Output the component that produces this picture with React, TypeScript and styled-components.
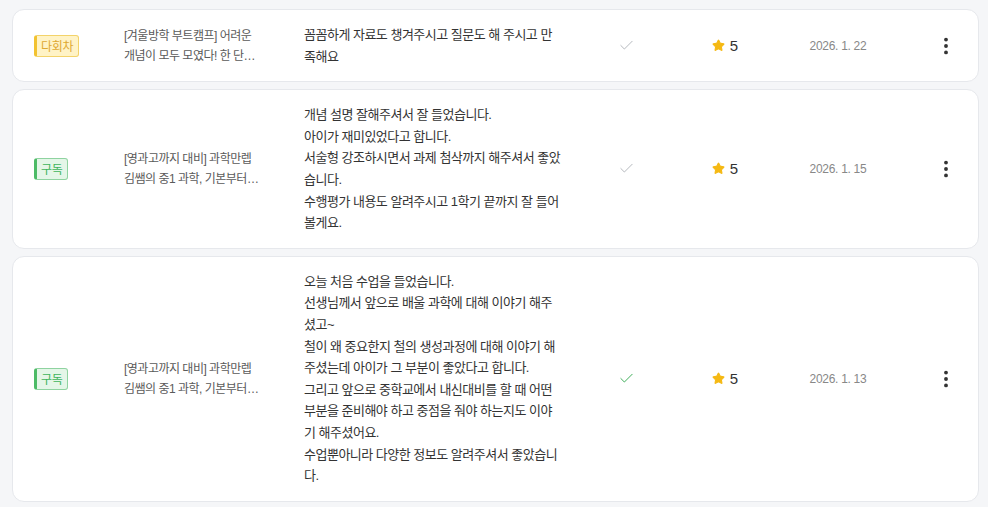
import React from 'react';
import styled, { createGlobalStyle } from 'styled-components';
import { Check, Star, EllipsisVertical } from 'lucide-react';

const GlobalStyle = createGlobalStyle`
  html, body {
    margin: 0;
    padding: 0;
    background: #f5f6f8;
  }
  body {
    font-family: 'Liberation Sans', 'Noto Sans CJK KR', sans-serif;
    color: #333;
  }
`;

const List = styled.div`
  display: flex;
  flex-direction: column;
  gap: 7px;
  padding: 9px 9px 9px 12px;
`;

const Card = styled.div`
  display: grid;
  grid-template-columns: 90px 180px 272px 101px 96px 130px 1fr 40px;
  align-items: center;
  padding: 14px 12px 14px 21px;
  background: #fff;
  border: 1px solid #e6e8ec;
  border-radius: 12px;
`;

const Badge = styled.span<{ $tone: 'yellow' | 'green' }>`
  justify-self: start;
  display: inline-flex;
  align-items: center;
  height: 20px;
  padding: 0 5px 0 4px;
  border: 1px solid ${(p) => (p.$tone === 'yellow' ? '#f3d36a' : '#8fd3a0')};
  border-left: 3px solid ${(p) => (p.$tone === 'yellow' ? '#f2c230' : '#4cbb66')};
  border-radius: 3px;
  background: ${(p) => (p.$tone === 'yellow' ? '#fff3c6' : '#e4f6e8')};
  color: ${(p) => (p.$tone === 'yellow' ? '#dea832' : '#3fb45c')};
  font-size: 12px;
  letter-spacing: -0.3px;
`;

const Title = styled.div`
  width: 136px;
  font-size: 12px;
  line-height: 20px;
  letter-spacing: -0.5px;
  color: #5a5a5a;
  display: -webkit-box;
  -webkit-line-clamp: 2;
  -webkit-box-orient: vertical;
  overflow: hidden;
`;

const Content = styled.div`
  font-size: 13px;
  line-height: 21.6px;
  letter-spacing: -0.5px;
  color: #333;
  white-space: pre-line;
`;

const Cell = styled.div`
  display: flex;
  align-items: center;
  justify-content: center;
`;

const Rating = styled(Cell)`
  gap: 5px;
  font-size: 15px;
  color: #333;
`;

const DateText = styled(Cell)`
  font-size: 12px;
  letter-spacing: -0.3px;
  color: #888;
`;

const MoreButton = styled.button`
  grid-column: 8;
  display: flex;
  align-items: center;
  justify-content: center;
  padding: 0;
  border: none;
  background: none;
  color: #333;
  cursor: pointer;
`;

interface Review {
  badge: string;
  tone: 'yellow' | 'green';
  title: string;
  content: string;
  answered: boolean;
  rating: number;
  date: string;
}

const reviews: Review[] = [
  {
    badge: '다회차',
    tone: 'yellow',
    title: '[겨울방학 부트캠프] 어려운 개념이 모두 모였다! 한 단원씩 완성하는 중등 과학 총정리',
    content: '꼼꼼하게 자료도 챙겨주시고 질문도 해 주시고 만\n족해요',
    answered: false,
    rating: 5,
    date: '2026. 1. 22',
  },
  {
    badge: '구독',
    tone: 'green',
    title: '[영과고까지 대비] 과학만렙 김쌤의 중1 과학, 기본부터 심화까지 한 번에 끝내기',
    content:
      '개념 설명 잘해주셔서 잘 들었습니다.\n아이가 재미있었다고 합니다.\n서술형 강조하시면서 과제 첨삭까지 해주셔서 좋았\n습니다.\n수행평가 내용도 알려주시고 1학기 끝까지 잘 들어\n볼게요.',
    answered: false,
    rating: 5,
    date: '2026. 1. 15',
  },
  {
    badge: '구독',
    tone: 'green',
    title: '[영과고까지 대비] 과학만렙 김쌤의 중1 과학, 기본부터 심화까지 한 번에 끝내기',
    content:
      '오늘 처음 수업을 들었습니다.\n선생님께서 앞으로 배울 과학에 대해 이야기 해주\n셨고~\n철이 왜 중요한지 철의 생성과정에 대해 이야기 해\n주셨는데 아이가 그 부분이 좋았다고 합니다.\n그리고 앞으로 중학교에서 내신대비를 할 때 어떤\n부분을 준비해야 하고 중점을 줘야 하는지도 이야\n기 해주셨어요.\n수업뿐아니라 다양한 정보도 알려주셔서 좋았습니\n다.',
    answered: true,
    rating: 5,
    date: '2026. 1. 13',
  },
];

function ReviewRow({ review }: { review: Review }) {
  return (
    <Card>
      <Badge $tone={review.tone}>{review.badge}</Badge>
      <Title>{review.title}</Title>
      <Content>{review.content}</Content>
      <Cell>
        <Check size={17} strokeWidth={1.4} color={review.answered ? '#3fae5a' : '#b5b8bd'} />
      </Cell>
      <Rating>
        <Star size={13} fill="#f5b914" color="#f5b914" strokeWidth={2} strokeLinejoin="round" />
        {review.rating}
      </Rating>
      <DateText>{review.date}</DateText>
      <MoreButton>
        <EllipsisVertical size={22} strokeWidth={2.2} />
      </MoreButton>
    </Card>
  );
}

export default function App() {
  return (
    <>
      <GlobalStyle />
      <List>
        {reviews.map((r, i) => (
          <ReviewRow key={i} review={r} />
        ))}
      </List>
    </>
  );
}
